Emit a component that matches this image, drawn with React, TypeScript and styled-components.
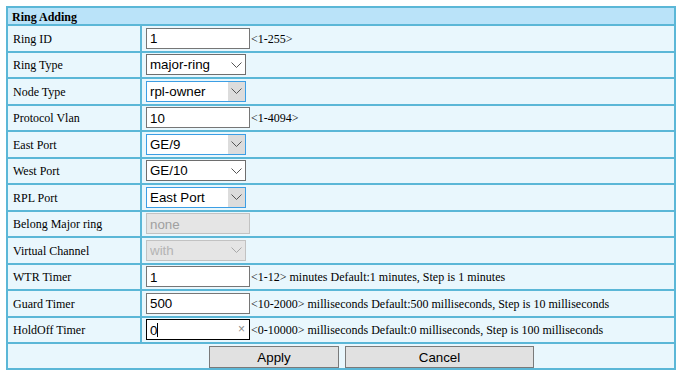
import React, { useState } from 'react';
import styled, { createGlobalStyle } from 'styled-components';

const GlobalStyle = createGlobalStyle`
  html, body {
    margin: 0;
    padding: 0;
    background: #ffffff;
  }
  body {
    font-family: "Liberation Serif", "Times New Roman", serif;
    font-size: 12px;
    color: #000;
  }
`;

type Field =
  | { label: string; kind: 'text'; value: string; hint?: string; focused?: boolean }
  | { label: string; kind: 'select'; value: string; options: string[]; active?: boolean; disabled?: boolean }
  | { label: string; kind: 'disabledText'; value: string };

const fields: Field[] = [
  { label: 'Ring ID', kind: 'text', value: '1', hint: '<1-255>' },
  { label: 'Ring Type', kind: 'select', value: 'major-ring', options: ['major-ring', 'sub-ring'] },
  { label: 'Node Type', kind: 'select', value: 'rpl-owner', options: ['rpl-owner', 'normal'], active: true },
  { label: 'Protocol Vlan', kind: 'text', value: '10', hint: '<1-4094>' },
  { label: 'East Port', kind: 'select', value: 'GE/9', options: ['GE/9', 'GE/10'], active: true },
  { label: 'West Port', kind: 'select', value: 'GE/10', options: ['GE/9', 'GE/10'] },
  { label: 'RPL Port', kind: 'select', value: 'East Port', options: ['East Port', 'West Port'], active: true },
  { label: 'Belong Major ring', kind: 'disabledText', value: 'none' },
  { label: 'Virtual Channel', kind: 'select', value: 'with', options: ['with', 'without'], disabled: true },
  {
    label: 'WTR Timer',
    kind: 'text',
    value: '1',
    hint: '<1-12> minutes Default:1 minutes, Step is 1 minutes',
  },
  {
    label: 'Guard Timer',
    kind: 'text',
    value: '500',
    hint: '<10-2000> milliseconds Default:500 milliseconds, Step is 10 milliseconds',
  },
  {
    label: 'HoldOff Timer',
    kind: 'text',
    value: '0',
    hint: '<0-10000> milliseconds Default:0 milliseconds, Step is 100 milliseconds',
    focused: true,
  },
];

const Chevron = () => (
  <svg width="11" height="6" viewBox="0 0 11 6">
    <path d="M0.5 0.5 L5.5 5.5 L10.5 0.5" fill="none" stroke="currentColor" strokeWidth="1" />
  </svg>
);

const App = () => {
  const [values, setValues] = useState<Record<string, string>>(() =>
    Object.fromEntries(fields.map(f => [f.label, f.value])),
  );

  const changeHandler = (label: string, value: string) => {
    setValues({ ...values, [label]: value });
  };

  return (
    <Page>
      <GlobalStyle />
      <Table>
        <HeaderCell>Ring Adding</HeaderCell>
        {fields.map(f => (
          <React.Fragment key={f.label}>
            <LabelCell>{f.label}</LabelCell>
            <ValueCell>
              {f.kind === 'text' && (
                <>
                  <InputWrap>
                    <TextInput
                      $focused={f.focused}
                      value={values[f.label]}
                      onChange={e => changeHandler(f.label, e.target.value)}
                    />
                    {f.focused && (
                      <>
                        <Caret style={{ left: 4 + values[f.label].length * 7.4 }} />
                        <ClearMark>×</ClearMark>
                      </>
                    )}
                  </InputWrap>
                  {f.hint && <Hint>{f.hint}</Hint>}
                </>
              )}
              {f.kind === 'select' && (
                <SelectWrap $active={f.active} $disabled={f.disabled}>
                  <Select
                    value={values[f.label]}
                    disabled={f.disabled}
                    $disabled={f.disabled}
                    onChange={e => changeHandler(f.label, e.target.value)}
                  >
                    {f.options.map(o => (
                      <option key={o} value={o}>
                        {o}
                      </option>
                    ))}
                  </Select>
                  <ArrowArea $active={f.active} $disabled={f.disabled}>
                    <Chevron />
                  </ArrowArea>
                </SelectWrap>
              )}
              {f.kind === 'disabledText' && <DisabledInput value={values[f.label]} disabled readOnly />}
            </ValueCell>
          </React.Fragment>
        ))}
        <ButtonCell>
          <Button $w={130}>Apply</Button>
          <Button $w={189}>Cancel</Button>
        </ButtonCell>
      </Table>
    </Page>
  );
};

export default App;

const Page = styled.div`
  padding: 6px;
`;

const Table = styled.div`
  display: grid;
  grid-template-columns: 132px 1fr;
  grid-template-rows: 16px repeat(12, 24.5px) 24px;
  gap: 2px;
  width: 670px;
  box-sizing: border-box;
  padding: 2px;
  background: #5bb7d7;
`;

const HeaderCell = styled.div`
  grid-column: 1 / 3;
  background: #bae3f9;
  font-weight: bold;
  padding: 1px 0 0 4px;
  line-height: 17px;
`;

const LabelCell = styled.div`
  display: flex;
  align-items: center;
  padding: 2px 0 0 5px;
  background: #e9f7fd;
`;

const ValueCell = styled.div`
  display: flex;
  align-items: center;
  padding-left: 4px;
  background: #e9f7fd;
`;

const ButtonCell = styled.div`
  grid-column: 1 / 3;
  display: flex;
  align-items: flex-end;
  gap: 6px;
  padding-left: 201px;
  background: #e9f7fd;
`;

const InputWrap = styled.div`
  position: relative;
  display: flex;
`;

const TextInput = styled.input<{ $focused?: boolean }>`
  box-sizing: border-box;
  width: 104px;
  height: 21px;
  margin: 0;
  padding: 1px 3px 0;
  border: 1px solid ${p => (p.$focused ? '#000' : '#767676')};
  background: #fff;
  font-family: "Liberation Sans", Arial, sans-serif;
  font-size: 13.33px;
  color: #000;
  outline: none;
`;

const Caret = styled.span`
  position: absolute;
  top: 4px;
  width: 1px;
  height: 14px;
  background: #000;
`;

const ClearMark = styled.span`
  position: absolute;
  right: 5px;
  top: 3px;
  font-family: "Liberation Sans", Arial, sans-serif;
  font-size: 12px;
  color: #8a8a8a;
`;

const Hint = styled.span`
  margin-left: 1px;
  padding-top: 2px;
  white-space: nowrap;
`;

const SelectWrap = styled.div<{ $active?: boolean; $disabled?: boolean }>`
  position: relative;
  width: 100px;
  height: 21px;
  box-sizing: border-box;
  border: 1px solid
    ${p => (p.$disabled ? '#c2c2c2' : p.$active ? '#3c9ee4' : '#6e6e6e')};
  background: ${p => (p.$disabled ? '#e5e5e5' : '#fff')};
`;

const Select = styled.select<{ $disabled?: boolean }>`
  appearance: none;
  width: 100%;
  height: 100%;
  margin: 0;
  padding: 0 0 0 3px;
  border: none;
  background: transparent;
  font-family: "Liberation Sans", Arial, sans-serif;
  font-size: 13.33px;
  color: ${p => (p.$disabled ? '#a0a0a0' : '#000')};
  outline: none;
`;

const ArrowArea = styled.span<{ $active?: boolean; $disabled?: boolean }>`
  position: absolute;
  top: 0;
  right: 0;
  bottom: 0;
  width: 17px;
  display: flex;
  align-items: center;
  justify-content: center;
  pointer-events: none;
  background: ${p => (p.$active ? '#dcdcdc' : 'transparent')};
  color: ${p => (p.$disabled ? '#a8a8a8' : '#555')};
`;

const DisabledInput = styled.input`
  box-sizing: border-box;
  width: 104px;
  height: 21px;
  margin: 0;
  padding: 1px 3px 0;
  border: 1px solid #c2c2c2;
  background: #e5e5e5;
  font-family: "Liberation Sans", Arial, sans-serif;
  font-size: 13.33px;
  color: #a0a0a0;
`;

const Button = styled.button<{ $w: number }>`
  box-sizing: border-box;
  width: ${p => p.$w}px;
  height: 22px;
  margin: 0;
  padding: 0;
  border: 1px solid #7a7a7a;
  background: #e1e1e1;
  font-family: "Liberation Sans", Arial, sans-serif;
  font-size: 13.33px;
  color: #000;
  cursor: pointer;
`;
